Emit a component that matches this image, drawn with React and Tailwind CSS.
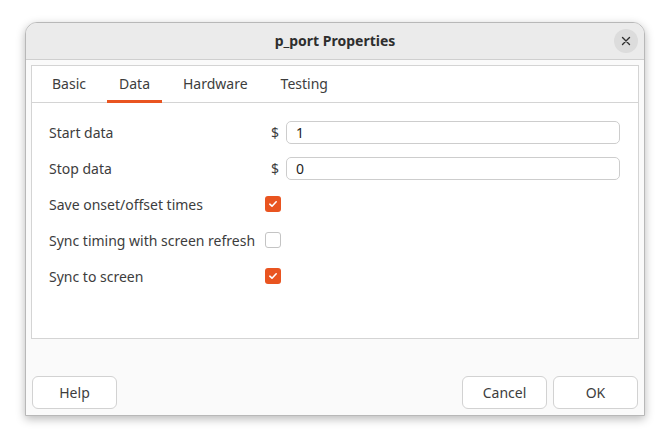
import React, { useState } from 'react';

const tabs = ['Basic', 'Data', 'Hardware', 'Testing'];

const CheckBox = ({ checked }) =>
  checked ? (
    <div className="w-4 h-4 rounded-[3px] bg-[#e95420] flex items-center justify-center">
      <svg width="10" height="10" viewBox="0 0 10 10" fill="none">
        <path d="M1.8 5.2 L4 7.2 L8.2 2.8" stroke="#fff" strokeWidth="1.6" strokeLinecap="round" strokeLinejoin="round" />
      </svg>
    </div>
  ) : (
    <div className="w-4 h-4 rounded-[3px] border border-[#c4c4c4] bg-white" />
  );

const Entry = ({ value }) => (
  <div className="flex items-center gap-[7px] pl-[6px]">
    <span className="text-[#3d3d3d]">$</span>
    <div className="flex-1 h-[23px] rounded-[5px] border border-[#cdcdcd] bg-white flex items-center px-[9px] text-[#1e1e1e]">
      {value}
    </div>
  </div>
);

const DialogButton = ({ children }) => (
  <button className="w-[85px] h-[33px] rounded-[6px] border border-[#d2d2d2] bg-white text-[#3d3d3d] flex items-center justify-center">
    {children}
  </button>
);

export default function App() {
  const [active, setActive] = useState('Data');

  return (
    <div
      className="w-[670px] h-[444px] bg-white pt-[22px] pl-[25px] text-[14px]"
      style={{ fontFamily: '"Noto Sans", "Open Sans", sans-serif' }}
    >
      <div className="w-[620px] h-[394px] rounded-t-[12px] border border-[#b8b8b8] bg-[#fafafa] shadow-[0_3px_10px_rgba(0,0,0,0.28)] flex flex-col overflow-hidden">
        {/* title bar */}
        <div className="h-[37px] shrink-0 bg-[#ebebeb] border-b border-[#cfcfcf] flex items-center justify-center relative">
          <span className="font-bold text-[#2e2e2e] -mt-px">p_port Properties</span>
          <button className="absolute right-[6px] top-[6px] w-6 h-6 rounded-full bg-[#dcdcdc] flex items-center justify-center">
            <svg width="10" height="10" viewBox="0 0 10 10">
              <path d="M1.5 1.5 L8.5 8.5 M8.5 1.5 L1.5 8.5" stroke="#2e2e2e" strokeWidth="1.4" strokeLinecap="round" />
            </svg>
          </button>
        </div>

        {/* notebook */}
        <div className="mx-[5px] mt-[5px] h-[274px] border border-[#d4d4d4] bg-white flex flex-col">
          <div className="h-[37px] shrink-0 border-b border-[#d4d4d4] flex items-end pl-[8px] gap-[9px]">
            {tabs.map((t) => (
              <button
                key={t}
                onClick={() => setActive(t)}
                className={`h-full px-3 flex items-center border-b-[3px] -mb-px ${
                  active === t ? 'border-[#e95420]' : 'border-transparent'
                } text-[#3d3d3d]`}
              >
                {t}
              </button>
            ))}
          </div>

          <div className="pt-[17px] pl-[17px] pr-[18px] grid grid-cols-[216px_1fr] gap-y-[12px] items-center text-[#3d3d3d]">
            <span className="h-6 flex items-center">Start data</span>
            <Entry value="1" />
            <span className="h-6 flex items-center">Stop data</span>
            <Entry value="0" />
            <span className="h-6 flex items-center">Save onset/offset times</span>
            <CheckBox checked />
            <span className="h-6 flex items-center">Sync timing with screen refresh</span>
            <CheckBox checked={false} />
            <span className="h-6 flex items-center">Sync to screen</span>
            <CheckBox checked />
          </div>
        </div>

        {/* buttons */}
        <div className="flex-1 flex items-end justify-between px-[6px] pb-[6px]">
          <DialogButton>Help</DialogButton>
          <div className="flex gap-[6px]">
            <DialogButton>Cancel</DialogButton>
            <DialogButton>OK</DialogButton>
          </div>
        </div>
      </div>
    </div>
  );
}
